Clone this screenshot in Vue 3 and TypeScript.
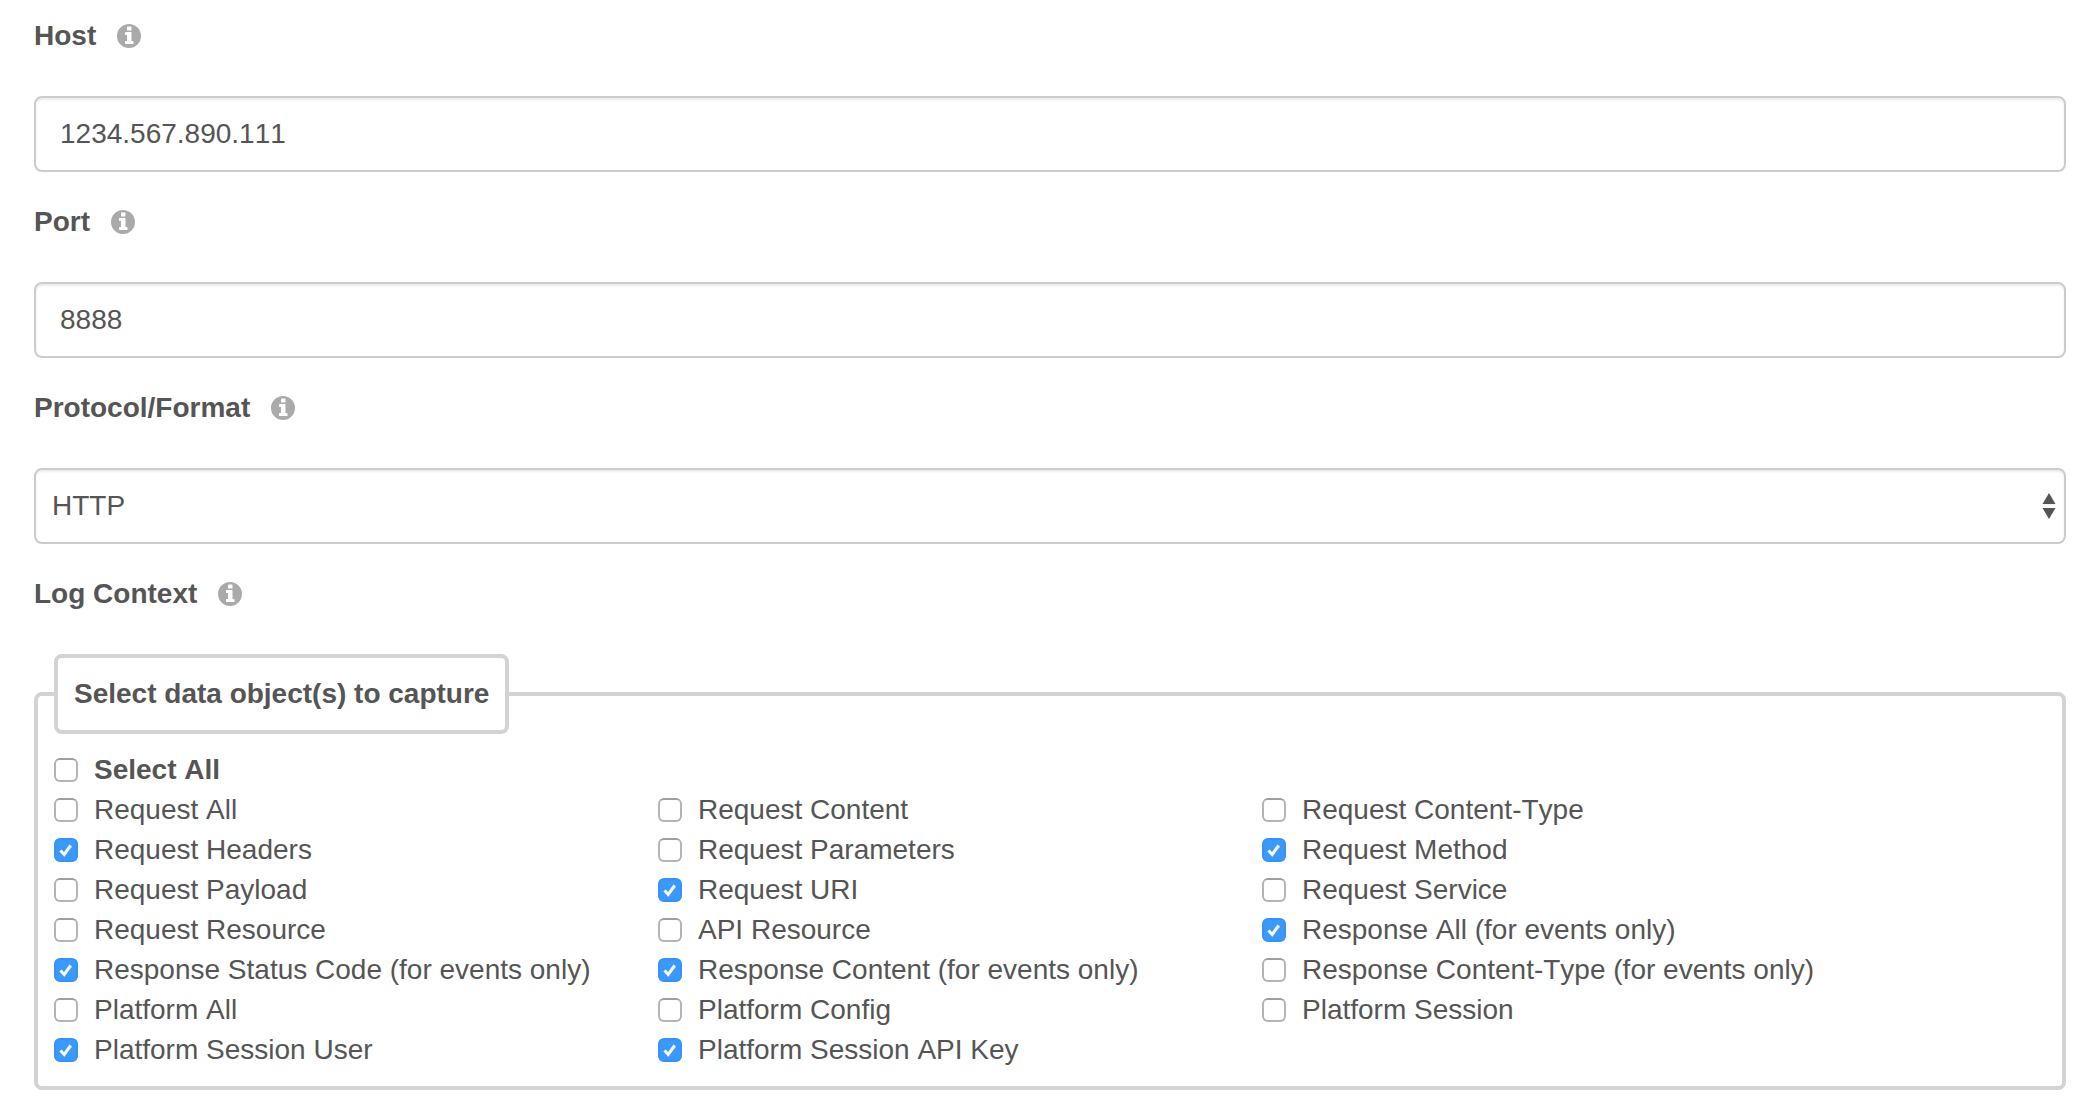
<script setup lang="ts">
import { ref } from 'vue'

interface CaptureOption {
  id: string
  label: string
  checked: boolean
}

const host = ref('1234.567.890.111')
const port = ref('8888')
const protocol = ref('HTTP')

const selectAll = ref(false)

const option = (label: string, checked = false): CaptureOption => ({
  id: label.toLowerCase().replace(/[^a-z]+/g, '-'),
  label,
  checked,
})

const options = ref<CaptureOption[]>([
  option('Request All'),
  option('Request Content'),
  option('Request Content-Type'),
  option('Request Headers', true),
  option('Request Parameters'),
  option('Request Method', true),
  option('Request Payload'),
  option('Request URI', true),
  option('Request Service'),
  option('Request Resource'),
  option('API Resource'),
  option('Response All (for events only)', true),
  option('Response Status Code (for events only)', true),
  option('Response Content (for events only)', true),
  option('Response Content-Type (for events only)'),
  option('Platform All'),
  option('Platform Config'),
  option('Platform Session'),
  option('Platform Session User', true),
  option('Platform Session API Key', true),
])

const infoPath =
  'M12 0a12 12 0 1 0 0 24a12 12 0 1 0 0-24z' +
  'M10.5 2.5h3.500a.5.5 0 0 1 .5.5v3a.5.5 0 0 1-.5.5h-3.500a.5.5 0 0 1-.5-.5V3a.5.5 0 0 1 .5-.5z' +
  'M8.5 8h5.500a.5.5 0 0 1 .5.5V17h1.500a.5.5 0 0 1 .5.5v2a.5.5 0 0 1-.5.5h-7.500a.5.5 0 0 1-.5-.5v-2a.5.5 0 0 1 .5-.5H10v-6H8.500a.5.5 0 0 1-.5-.5v-2a.5.5 0 0 1 .5-.5z'
</script>

<template>
  <form class="form" @submit.prevent>
    <div class="field">
      <div class="heading">
        <label for="host">Host</label>
        <svg class="info" viewBox="0 0 24 24" aria-hidden="true"><path :d="infoPath" fill-rule="evenodd" /></svg>
      </div>
      <input id="host" v-model="host" class="control" type="text" />
    </div>

    <div class="field">
      <div class="heading">
        <label for="port">Port</label>
        <svg class="info" viewBox="0 0 24 24" aria-hidden="true"><path :d="infoPath" fill-rule="evenodd" /></svg>
      </div>
      <input id="port" v-model="port" class="control" type="text" />
    </div>

    <div class="field">
      <div class="heading">
        <label for="protocol">Protocol/Format</label>
        <svg class="info" viewBox="0 0 24 24" aria-hidden="true"><path :d="infoPath" fill-rule="evenodd" /></svg>
      </div>
      <div class="select">
        <select id="protocol" v-model="protocol" class="control">
          <option>HTTP</option>
        </select>
        <svg class="arrows" viewBox="0 0 14 26" aria-hidden="true">
          <path d="M7 0l6.500 11H.5zM7 26l6.500-11H.5z" />
        </svg>
      </div>
    </div>

    <div class="field">
      <div class="heading">
        <span id="log-context">Log Context</span>
        <svg class="info" viewBox="0 0 24 24" aria-hidden="true"><path :d="infoPath" fill-rule="evenodd" /></svg>
      </div>
      <fieldset class="capture" aria-describedby="log-context">
        <legend>Select data object(s) to capture</legend>
        <div class="options">
          <label class="option all" for="select-all">
            <span class="tick">
              <input id="select-all" v-model="selectAll" type="checkbox" />
            </span>
            Select All
          </label>
          <label v-for="item in options" :key="item.id" class="option" :for="item.id">
            <span class="tick">
              <input :id="item.id" v-model="item.checked" type="checkbox" />
              <svg v-if="item.checked" viewBox="0 0 24 24" aria-hidden="true">
                <path d="M6.500 12.500l3.700 4L16.700 7.500" />
              </svg>
            </span>
            {{ item.label }}
          </label>
        </div>
      </fieldset>
    </div>
  </form>
</template>

<style>
body {
  background: #fff;
}
</style>

<style scoped>
.form {
  display: flex;
  flex-direction: column;
  gap: 30px;
  padding: 16px 30px 20px 34px;
  color: #555;
  font-family: "Helvetica Neue", Helvetica, "Liberation Sans", Arial, sans-serif;
  font-size: 28px;
  line-height: 40px;
  font-kerning: none;
}

.field {
  display: flex;
  flex-direction: column;
  gap: 40px;
}

.heading {
  display: flex;
  align-items: center;
  gap: 21px;
  font-weight: bold;
}

.info {
  width: 24px;
  height: 24px;
  fill: #aaa;
}

.control {
  display: block;
  box-sizing: border-box;
  width: 100%;
  height: 76px;
  margin: 0;
  padding: 16px 24px;
  border: 2px solid #ccc;
  border-radius: 8px;
  background: #fff;
  box-shadow: inset 0 2px 2px rgba(0, 0, 0, 0.075);
  color: inherit;
  font: inherit;
  font-kerning: none;
  appearance: none;
}

.select {
  position: relative;
}

.select .control {
  padding-left: 16px;
}

.arrows {
  position: absolute;
  top: 25px;
  right: 10px;
  width: 14px;
  height: 26px;
  fill: #555;
  pointer-events: none;
}

.capture {
  min-width: 0;
  margin: 0;
  padding: 16px;
  border: 4px solid #d3d3d3;
  border-radius: 8px;
}

legend {
  padding: 16px;
  border: 4px solid #d3d3d3;
  border-radius: 8px;
  font-weight: bold;
}

.options {
  display: grid;
  grid-template-columns: 604fr 604fr 784fr;
}

.option {
  display: flex;
  align-items: center;
  gap: 16px;
}

.all {
  grid-column: 1 / -1;
  font-weight: bold;
}

.tick {
  display: grid;
  width: 24px;
  height: 24px;
}

.tick input,
.tick svg {
  grid-area: 1 / 1;
  box-sizing: border-box;
  width: 24px;
  height: 24px;
  margin: 0;
}

.tick input {
  border: 2px solid #b4b4b4;
  border-top-color: #a0a0a0;
  border-radius: 6px;
  background: #fff;
  appearance: none;
}

.tick input:checked {
  border-color: #3693fd;
  background: #3b99fc;
}

.tick svg {
  fill: none;
  stroke: #fff;
  stroke-width: 3;
  pointer-events: none;
}
</style>
